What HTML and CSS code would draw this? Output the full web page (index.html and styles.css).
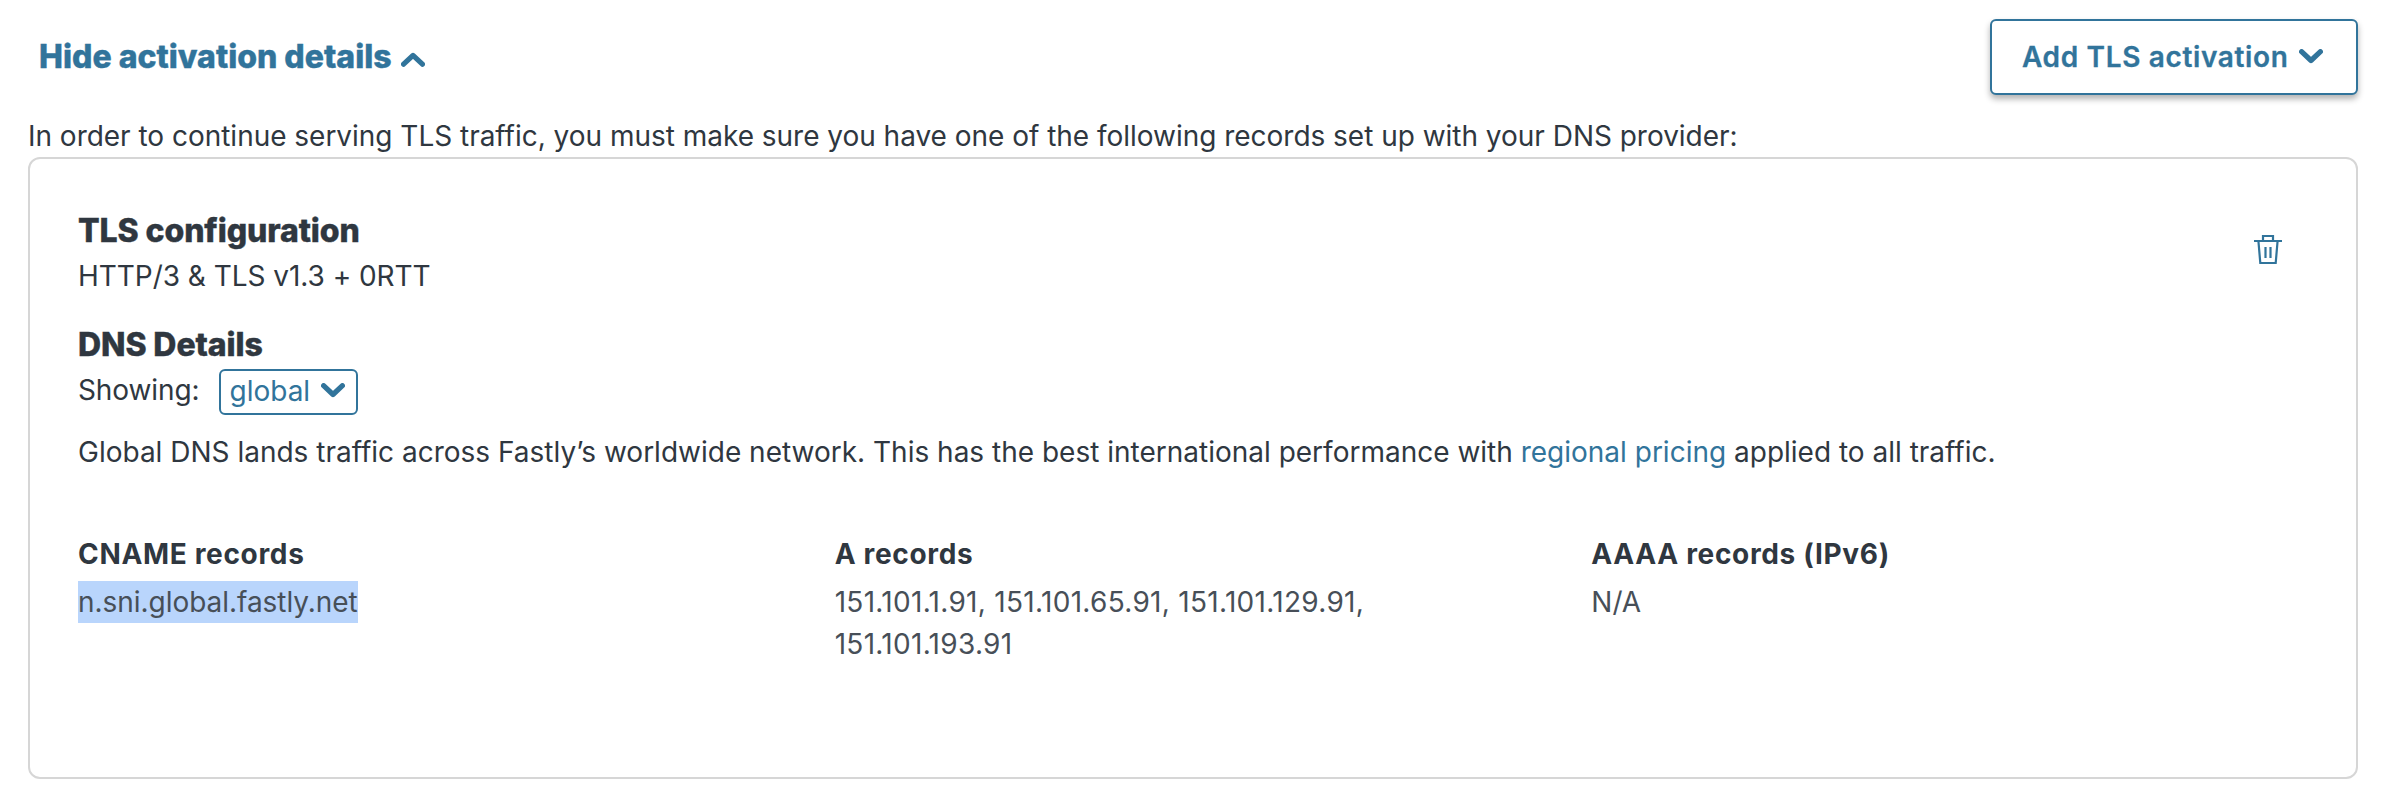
FILE: index.html
```html
<!DOCTYPE html>
<html lang="en">
<head>
<meta charset="utf-8">
<title>TLS activation</title>
<link rel="stylesheet" href="styles.css">
</head>
<body>
<main class="page">
  <header class="toolbar">
    <a class="toggle"><span>Hide activation details</span>
      <svg class="chevron" viewBox="0 0 24 15"><path d="M2.600 12.200 12 3.400l9.400 8.800"/></svg></a>
    <button class="add-button"><span>Add TLS activation</span>
      <svg class="chevron" viewBox="0 0 24 15"><path d="M2.600 2.700 12 11.500l9.400-8.800"/></svg></button>
  </header>
  <p class="intro"><span>In order to continue serving TLS traffic, you must make sure you have one of the following records set up with your DNS provider:</span></p>
  <section class="card">
    <div class="card-top">
      <div>
        <h2 class="heading"><span>TLS configuration</span></h2>
        <p class="text protocols"><span>HTTP/3 &amp; TLS v1.3 + 0RTT</span></p>
      </div>
      <svg class="trash" viewBox="0 0 28 30"><path d="M0 6h28M9 6V1h10v5M4.500 7l1.800 21h15.400L23.500 7M11.500 12v11M16.500 12v11"/></svg>
    </div>
    <h2 class="heading dns-heading"><span>DNS Details</span></h2>
    <div class="showing">
      <span class="showing-label">Showing:</span>
      <button class="select"><span>global</span>
        <svg class="chevron" viewBox="0 0 24 15"><path d="M2.600 2.700 12 11.500l9.400-8.800"/></svg></button>
    </div>
    <p class="text description"><span>Global DNS lands traffic across Fastly’s worldwide network. This has the best international performance with <a class="link">regional pricing</a> applied to all traffic.</span></p>
    <div class="records">
      <div class="record">
        <h3 class="record-title"><span>CNAME records</span></h3>
        <p class="record-value"><span class="selected">n.sni.global.fastly.net</span></p>
      </div>
      <div class="record">
        <h3 class="record-title"><span>A records</span></h3>
        <p class="record-value ips"><span>151.101.1.91, 151.101.65.91, 151.101.129.91, 151.101.193.91</span></p>
      </div>
      <div class="record">
        <h3 class="record-title"><span>AAAA records (IPv6)</span></h3>
        <p class="record-value"><span>N/A</span></p>
      </div>
    </div>
  </section>
</main>
</body>
</html>
```
FILE: styles.css
```css
* { box-sizing: border-box; margin: 0; padding: 0; }
body {
  background: #fff;
  color: #2f3740;
  font-family: Inter, "Liberation Sans", sans-serif;
  font-size: 28px;
  line-height: 42px;
}
.page { padding: 19px 24px 0 28px; }
.toolbar { display: flex; justify-content: space-between; height: 96px; }
.toggle {
  display: flex;
  align-items: center;
  gap: 9px;
  height: 76px;
  padding-left: 11px;
  color: #31749b;
  font-size: 32px;
  font-weight: 800;
  line-height: 48px;
  -webkit-text-stroke: 0.4px;
}
.chevron {
  width: 24px;
  height: 15px;
  fill: none;
  stroke: #31749b;
  stroke-width: 5.2;
  stroke-linecap: round;
  stroke-linejoin: round;
}
.toggle .chevron { margin-top: 5px; }
.add-button .chevron { margin-bottom: 2px; }
.add-button {
  display: flex;
  align-items: center;
  justify-content: space-between;
  width: 368px;
  height: 76px;
  padding: 0 33px 0 30px;
  border: 2px solid #31749b;
  border-radius: 6px;
  background: #fff;
  box-shadow: 0 4px 6px rgba(0, 0, 0, 0.3);
  color: #31749b;
  font: 600 28px/42px Inter, sans-serif;
  letter-spacing: 0.65px;
  -webkit-text-stroke: 0.3px;
}
.intro { letter-spacing: -0.022px; }
.card {
  height: 622px;
  padding: 48px;
  border: 2px solid #d6d6d6;
  border-radius: 12px;
}
.card-top { display: flex; justify-content: space-between; }
.heading {
  font-size: 32px;
  font-weight: 800;
  line-height: 48px;
  letter-spacing: -0.1px;
  -webkit-text-stroke: 0.4px;
}
.protocols { letter-spacing: -0.04px; }
.trash {
  width: 28px;
  height: 30px;
  margin: 28px 26px 0 0;
  fill: none;
  stroke: #31749b;
  stroke-width: 2.2;
}
.dns-heading { margin-top: 24px; }
.showing { display: flex; gap: 20px; letter-spacing: -0.1px; }
.select {
  display: flex;
  align-items: center;
  justify-content: space-between;
  width: 139px;
  height: 46px;
  padding: 0 11px 2px 8px;
  border: 2px solid #31749b;
  border-radius: 6px;
  background: #fff;
  color: #31749b;
  font: 400 28px/42px Inter, sans-serif;
}
.select .chevron { margin-bottom: 2px; }
.description { margin-top: 16px; }
.link { color: #31749b; }
.records { display: grid; grid-template-columns: repeat(3, 1fr); gap: 40px; margin-top: 60px; }
.record-title { margin-bottom: 6px; font-size: 28px; font-weight: 700; line-height: 42px; letter-spacing: 0.67px; }
.record-value { padding-right: 40px; color: #474f58; }
.ips { letter-spacing: 0.3px; }
.selected { display: inline-block; background: #b9d5fc; letter-spacing: -0.04px; }
```
